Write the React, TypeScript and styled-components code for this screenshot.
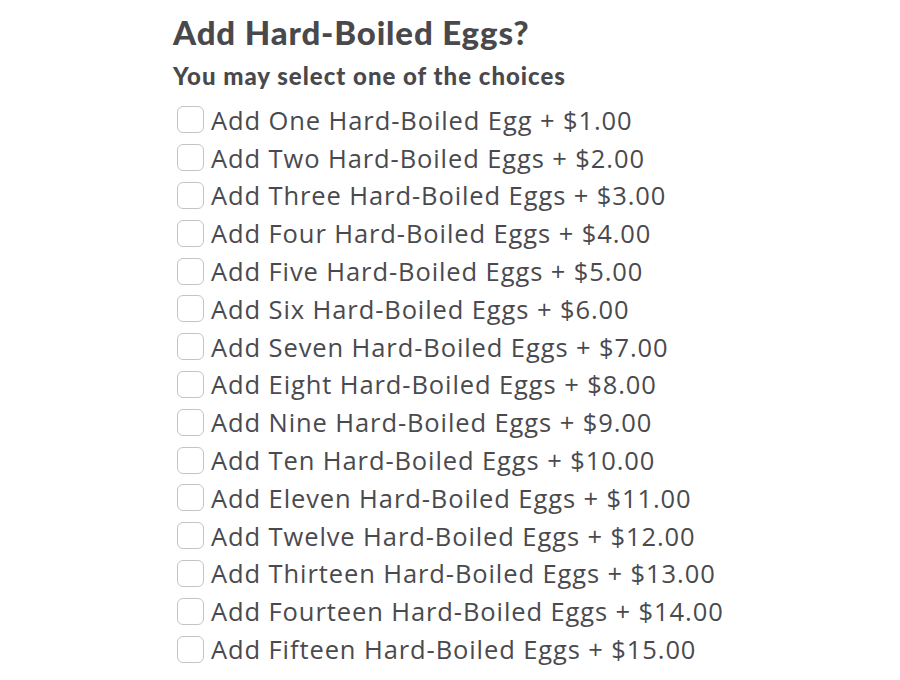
import React from "react";
import styled, { createGlobalStyle } from "styled-components";

const Global = createGlobalStyle`
  html, body { margin: 0; padding: 0; background: #ffffff; }
  body { font-family: "Open Sans", "Liberation Sans", sans-serif; }
`;

const Page = styled.div`
  width: 900px;
  height: 680px;
  overflow: hidden;
  box-sizing: border-box;
  padding: 12px 0 0 173px;
  display: flex;
  flex-direction: column;
`;

const Title = styled.h1`
  margin: 0;
  font-family: "Lato", sans-serif;
  font-weight: 900;
  font-size: 33px;
  line-height: 40px;
  color: #49494d;
  letter-spacing: 0.85px;
`;

const Subtitle = styled.h2`
  margin: 10px 0 0 0;
  font-family: "Lato", sans-serif;
  font-weight: 900;
  font-size: 24px;
  line-height: 28px;
  color: #49494d;
  letter-spacing: 1px;
`;

const List = styled.div`
  display: flex;
  flex-direction: column;
  margin-top: 11px;
`;

const Row = styled.label`
  display: flex;
  align-items: center;
  height: 37.8px;
  gap: 7px;
  padding-left: 4px;
`;

const Box = styled.span`
  width: 27px;
  height: 27px;
  box-sizing: border-box;
  border: 1.5px solid #c4c4c6;
  border-radius: 6px;
  background: #fff;
  flex: none;
`;

const Label = styled.span`
  font-family: "Open Sans", sans-serif;
  font-size: 25.5px;
  color: #4a4a4e;
  white-space: nowrap;
  letter-spacing: 0.9px;
`;

const words = [
  "One", "Two", "Three", "Four", "Five", "Six", "Seven", "Eight",
  "Nine", "Ten", "Eleven", "Twelve", "Thirteen", "Fourteen", "Fifteen",
];

export default function App() {
  return (
    <>
      <Global />
      <Page>
        <Title>Add Hard-Boiled Eggs?</Title>
        <Subtitle>You may select one of the choices</Subtitle>
        <List>
          {words.map((w, i) => (
            <Row key={w}>
              <Box />
              <Label>
                Add {w} Hard-Boiled {i === 0 ? "Egg" : "Eggs"} + ${i + 1}.00
              </Label>
            </Row>
          ))}
        </List>
      </Page>
    </>
  );
}
